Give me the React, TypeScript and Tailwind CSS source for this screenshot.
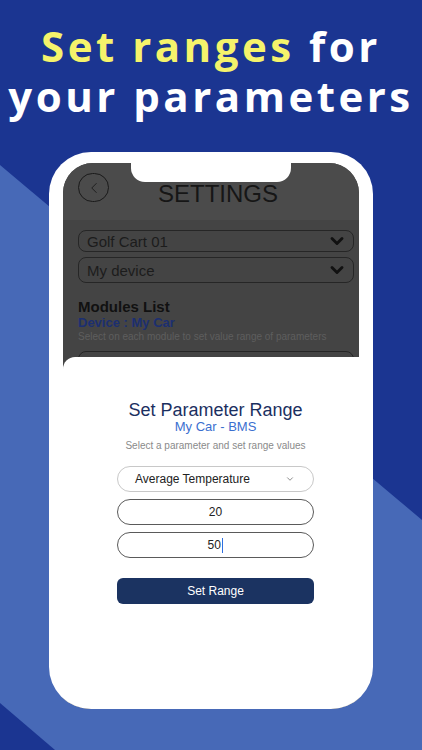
import { ChevronDown, ChevronLeft } from "lucide-react";

const Stripe = () => (
  <svg className="absolute inset-0 h-full w-full" viewBox="0 0 422 750" preserveAspectRatio="none">
    <polygon points="0,165 422,520 422,750 55,750 0,703" fill="#4769b7" />
  </svg>
);

const DimSelect = ({ label }: { label: string }) => (
  <div className="flex h-[26px] items-center justify-between rounded-[8px] border border-[#262626] pl-[8px] pr-[6px]">
    <span className="text-[15px] leading-none text-[#1c1c1c]">{label}</span>
    <ChevronDown className="h-[20px] w-[20px] text-[#111]" strokeWidth={3.5} />
  </div>
);

const Pill = ({ children, light }: { children: React.ReactNode; light?: boolean }) => (
  <div
    className={
      "flex h-[26px] w-[197px] items-center rounded-full border bg-white text-[12px] text-[#222] " +
      (light ? "border-[#c8c8c8]" : "border-[#5a5a5a]")
    }
  >
    {children}
  </div>
);

export default function App() {
  return (
    <div className="relative h-[750px] w-[422px] overflow-hidden bg-[#1b3591]">
      <Stripe />

      <div className="relative flex flex-col items-center pt-[21px] font-['Open_Sans',sans-serif] text-[42px] font-bold leading-[50px] tracking-[3.5px] text-white">
        <div>
          <span className="text-[#f5f36b]">Set ranges</span> for
        </div>
        <div>your parameters</div>
      </div>

      {/* phone */}
      <div className="relative mx-auto mt-[31px] h-[557px] w-[324px] overflow-hidden rounded-[42px] bg-white px-[14px] pt-[11px] font-['Liberation_Sans',Arial,sans-serif]">
        <div className="relative flex h-[546px] flex-col overflow-hidden rounded-t-[30px] bg-[#444]">
          <div className="absolute left-1/2 top-0 h-[19px] w-[160px] -translate-x-1/2 rounded-b-[14px] bg-white" />

          <div className="flex h-[57px] shrink-0 items-start bg-[#4b4b4b] pl-[15px] pt-[10px]">
            <div className="flex h-[29px] w-[31px] items-center justify-center rounded-full border border-[#1a1a1a]">
              <ChevronLeft className="h-[18px] w-[18px] text-[#1a1a1a]" strokeWidth={1.2} />
            </div>
            <span className="ml-[49px] mt-[7px] text-[24px] leading-[28px] text-[#161616]">SETTINGS</span>
          </div>

          <div className="flex h-[137px] shrink-0 flex-col overflow-hidden pl-[15px] pr-[5px] pt-[10px]">
            <DimSelect label="Golf Cart 01" />
            <div className="mt-[5px]">
              <DimSelect label="My device" />
            </div>
            <div className="mt-[16px] text-[15px] font-bold leading-[16px] text-[#111]">Modules List</div>
            <div className="text-[13px] font-bold leading-[16px] text-[#1c2f70]">Device : My Car</div>
            <div className="text-[10px] leading-[12px] text-[#5e5e5e]">
              Select on each module to set value range of parameters
            </div>
            <div className="mt-[8px] h-[30px] shrink-0 rounded-[8px] border border-[#262626]" />
          </div>

          <div className="flex flex-1 flex-col items-center rounded-tl-[12px] bg-white pl-[9px] pt-[43px]">
            <div className="text-[18px] leading-[20px] text-[#1b2f5f]">Set Parameter Range</div>
            <div className="text-[13px] leading-[14px] text-[#3b6fcf]">My Car - BMS</div>
            <div className="mt-[6px] text-[10px] leading-[12px] text-[#8a8a8a]">
              Select a parameter and set range values
            </div>

            <div className="mt-[14px]">
              <Pill light>
                <div className="flex w-full items-center justify-between pl-[17px] pr-[18px]">
                  <span>Average Temperature</span>
                  <ChevronDown className="h-[10px] w-[10px] text-[#777]" strokeWidth={2} />
                </div>
              </Pill>
            </div>
            <div className="mt-[7px]">
              <Pill>
                <span className="w-full text-center">20</span>
              </Pill>
            </div>
            <div className="mt-[7px]">
              <Pill>
                <span className="flex w-full items-center justify-center">
                  50<span className="ml-[1px] h-[15px] w-[1.5px] bg-[#2f6fe0]" />
                </span>
              </Pill>
            </div>

            <button className="mt-[20px] h-[26px] w-[197px] rounded-[6px] bg-[#1b3361] text-[12px] text-white">
              Set Range
            </button>
          </div>
        </div>
      </div>
    </div>
  );
}
